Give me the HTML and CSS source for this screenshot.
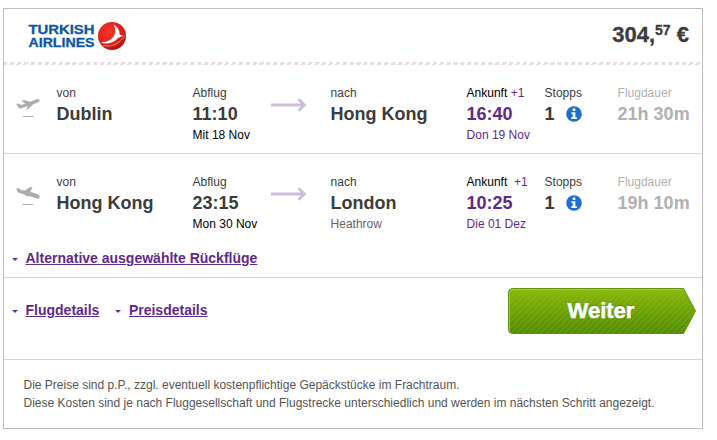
FILE: index.html
```html
<!DOCTYPE html>
<html lang="de">
<head>
<meta charset="utf-8">
<title>Flugangebot</title>
<link rel="stylesheet" href="styles.css">
</head>
<body>
<svg width="0" height="0" class="defs" aria-hidden="true">
  <symbol id="takeoff" viewBox="0 0 24 12">
    <path d="M0.3 4.9 2.2 4.4 5.3 6 9.3 4.5 5.5 1.9 8.2 1 14 2.7 19.2 0.8C21.4 0 23.3 0.2 23.6 1.2 23.8 2.1 22.8 2.9 21.2 3.7L17.2 5.2 12.8 9.8 10.2 10.9 12 7 4.6 9.4C3.7 9.7 3.1 9.4 2.6 8.7Z"/>
  </symbol>
  <symbol id="landing" viewBox="0 0 24 12">
    <path d="M0.4 1.6 2.2 1 5.2 3.1 8.8 3.6 13.4 0.3 16.6 0.2 14.4 4.8 21 7C23.3 7.9 24.2 9.4 23.5 10.7 22.7 11.8 21 11.5 19.4 10.9L15 9.4 10 8.9 8.2 7.5 3.6 6.1C1.6 5.5 0.8 4 0.4 1.6Z"/>
  </symbol>
  <symbol id="arrow" viewBox="0 0 36 14">
    <path d="M0 7H33M27.5 1.2 33.5 7 27.5 12.8" fill="none" stroke="#cdbcdb" stroke-width="2.8"/>
  </symbol>
  <symbol id="info" viewBox="0 0 16 16">
    <circle cx="8" cy="8" r="7.8" fill="#1f6fd2"/>
    <path d="M6.7 2.5H9.3V4.9H6.7ZM5.3 6.2H9.4V11.2H10.8V12.9H5.2V11.2H6.7V7.8H5.3Z" fill="#fff"/>
  </symbol>
</svg>
<main class="card">
  <header class="head">
    <svg class="logo" width="100" height="32" viewBox="0 0 100 32" role="img" aria-label="Turkish Airlines">
      <defs>
        <radialGradient id="ball" cx="40%" cy="35%" r="70%">
          <stop offset="0" stop-color="#f2382a"/>
          <stop offset=".65" stop-color="#de2019"/>
          <stop offset="1" stop-color="#a80c10"/>
        </radialGradient>
      </defs>
      <text class="logo-text" x="0.5" y="14.4" textLength="66" lengthAdjust="spacingAndGlyphs">TURKISH</text>
      <text class="logo-text" x="0.5" y="27.2" textLength="66" lengthAdjust="spacingAndGlyphs">AIRLINES</text>
      <circle cx="84" cy="16" r="14" fill="url(#ball)"/>
      <path d="M72.5 22.5C79 22.5 84 19.5 86.5 15 88 11 87 7 85.5 4.5 90 7 92 11 91.5 14.5 93 15.5 94.5 15.5 96 15.5 93 16.7 91 17.5 89.5 18.5 85 23 78 25 72.5 22.5Z" fill="#fff"/>
      <path d="M75 25.5C84 27.5 91 24 97 15.5" fill="none" stroke="#f5a097" stroke-width=".8"/>
    </svg>
    <div class="price">304,<span class="cents">57</span> €</div>
  </header>
  <div class="stripe"></div>

  <section class="leg">
    <div class="flight">
      <div class="plane"><svg width="24" height="12"><use href="#takeoff"/></svg><i></i></div>
      <div class="cell"><span>von</span><b>Dublin</b></div>
      <div class="cell"><span>Abflug</span><b>11:10</b><span class="black">Mit 18 Nov</span></div>
      <svg class="arrow" width="36" height="14"><use href="#arrow"/></svg>
      <div class="cell"><span>nach</span><b>Hong Kong</b></div>
      <div class="cell arrival"><span><em>Ankunft</em> +1</span><b>16:40</b><span>Don 19 Nov</span></div>
      <div class="cell"><span>Stopps</span><b class="stops">1<svg width="16" height="16"><use href="#info"/></svg></b></div>
      <div class="cell duration"><span>Flugdauer</span><b>21h 30m</b></div>
    </div>
  </section>

  <section class="leg return">
    <div class="flight">
      <div class="plane landing"><svg width="24" height="12"><use href="#landing"/></svg><i></i></div>
      <div class="cell"><span>von</span><b>Hong Kong</b></div>
      <div class="cell"><span>Abflug</span><b>23:15</b><span class="black">Mon 30 Nov</span></div>
      <svg class="arrow" width="36" height="14"><use href="#arrow"/></svg>
      <div class="cell"><span>nach</span><b>London</b><span class="airport">Heathrow</span></div>
      <div class="cell arrival"><span><em>Ankunft</em> &nbsp;+1</span><b>10:25</b><span>Die 01 Dez</span></div>
      <div class="cell"><span>Stopps</span><b class="stops">1<svg width="16" height="16"><use href="#info"/></svg></b></div>
      <div class="cell duration"><span>Flugdauer</span><b>19h 10m</b></div>
    </div>
    <div class="links alternatives"><a href="#">Alternative ausgewählte Rückflüge</a></div>
  </section>

  <section class="actions">
    <div class="links"><a href="#">Flugdetails</a><a href="#">Preisdetails</a></div>
    <button class="next" type="button">
      <svg class="next-bg" width="188" height="46" viewBox="0 0 188 46" aria-hidden="true">
        <defs>
          <linearGradient id="green" x1="0" y1="0" x2="0" y2="1">
            <stop offset="0" stop-color="#8ab90b"/>
            <stop offset="1" stop-color="#538b04"/>
          </linearGradient>
          <pattern id="hatch" width="6" height="6" patternUnits="userSpaceOnUse">
            <path d="M-1 1 1-1M0 6 6 0M5 7 7 5" stroke="#a4c53c" stroke-opacity=".36" stroke-width="1"/>
          </pattern>
        </defs>
        <path d="M4.5 .5H175.5L187.5 23 175.5 45.5H4.5Q.5 45.5 .5 41.5V4.5Q.5 .5 4.5 .5Z" fill="url(#green)"/>
        <path d="M4.5 .5H175.5L187.5 23 175.5 45.5H4.5Q.5 45.5 .5 41.5V4.5Q.5 .5 4.5 .5Z" fill="url(#hatch)" stroke="#5c920c"/>
        <path d="M1.5 43V5Q1.5 1.5 5 1.5H175" fill="none" stroke="#b0d350" stroke-opacity=".75"/>
      </svg>
      <span>Weiter</span>
    </button>
  </section>

  <footer class="note">Die Preise sind p.P., zzgl. eventuell kostenpflichtige Gepäckstücke im Frachtraum.<br>Diese Kosten sind je nach Fluggesellschaft und Flugstrecke unterschiedlich und werden im nächsten Schritt angezeigt.</footer>
</main>
</body>
</html>
```
FILE: styles.css
```css
* { box-sizing: border-box; }
body {
  margin: 0;
  padding: 8px 0 0 3px;
  background: #fff;
  color: #3c3c3c;
  font: 12px/16px "Liberation Sans", Arial, sans-serif;
}
.defs { position: absolute; }
svg { display: block; }
.card {
  width: 700px;
  height: 421px;
  border: 1px solid #bdbdbd;
  box-shadow: 0 2px 0 #dad5e1;
}
.head {
  display: flex;
  justify-content: space-between;
  height: 53px;
  padding: 11px 13px 0 24px;
}
.logo-text {
  font: bold 13.6px "Liberation Sans", Arial, sans-serif;
  fill: #0a56a8;
  stroke: #0a56a8;
  stroke-width: .3px;
}
.price {
  font-size: 22px;
  font-weight: bold;
  line-height: 30px;
  -webkit-text-stroke: .3px #3c3c3c;
}
.cents {
  font-size: 14px;
  line-height: 1;
  vertical-align: 7px;
}
.stripe {
  height: 3px;
  background: repeating-linear-gradient(120deg, #ecd8ed 0 3.5px, #fff 3.5px 6px);
}
.leg {
  height: 89px;
  padding-top: 20px;
  border-bottom: 1px solid #d6d2dc;
}
.return { height: 124px; }
.flight {
  display: grid;
  grid-template-columns: 40.6px 136px 78px 60px 136px 78px 73px 80px;
  height: 58px;
  padding-left: 12px;
  align-items: start;
}
.plane { padding-top: 14px; fill: #adadad; }
.plane i {
  display: block;
  width: 11px;
  height: 1px;
  margin: 5px 0 0 7px;
  background: #b0b0b0;
}
.landing { padding-top: 13px; }
.landing i { margin: 5px 0 0 6px; }
.arrow { margin-top: 13px; }
.cell {
  display: flex;
  flex-direction: column;
  gap: 1px;
  white-space: nowrap;
}
.cell b { font-size: 18px; line-height: 24px; }
.black, .cell em { color: #000; font-style: normal; }
.airport { color: #666; }
.arrival { color: #5f2a8c; }
.duration { color: #b0b0b0; }
.stops { display: flex; align-items: center; gap: 11px; }
.links { display: flex; gap: 16px; padding-left: 8px; }
.links a {
  display: flex;
  align-items: center;
  color: #5f2a8c;
  font-size: 14px;
  font-weight: bold;
  line-height: 18px;
}
.links a::before {
  content: "";
  width: 0;
  margin: 3px 7.5px 0 0;
  border: 3px solid transparent;
  border-top-color: #6b2f92;
  border-bottom: 0;
}
.alternatives { padding-top: 17px; }
.actions {
  display: flex;
  justify-content: space-between;
  height: 82px;
  padding: 10px 6px 0 0;
  border-bottom: 1px solid #d6d2dc;
}
.actions .links { height: 18px; margin-top: 13px; }
.next {
  display: grid;
  width: 188px;
  height: 46px;
  padding: 0;
  border: 0;
  background: none;
  color: #fff;
  font: bold 22px/45px "Liberation Sans", Arial, sans-serif;
  text-shadow: 0 -1px 1px #3f6c05;
  -webkit-text-stroke: .5px #fff;
}
.next > * { grid-area: 1 / 1; }
.next span { z-index: 1; padding-right: 2px; }
.note {
  padding: 16px 19.5px;
  color: #555;
  line-height: 18px;
}
```
